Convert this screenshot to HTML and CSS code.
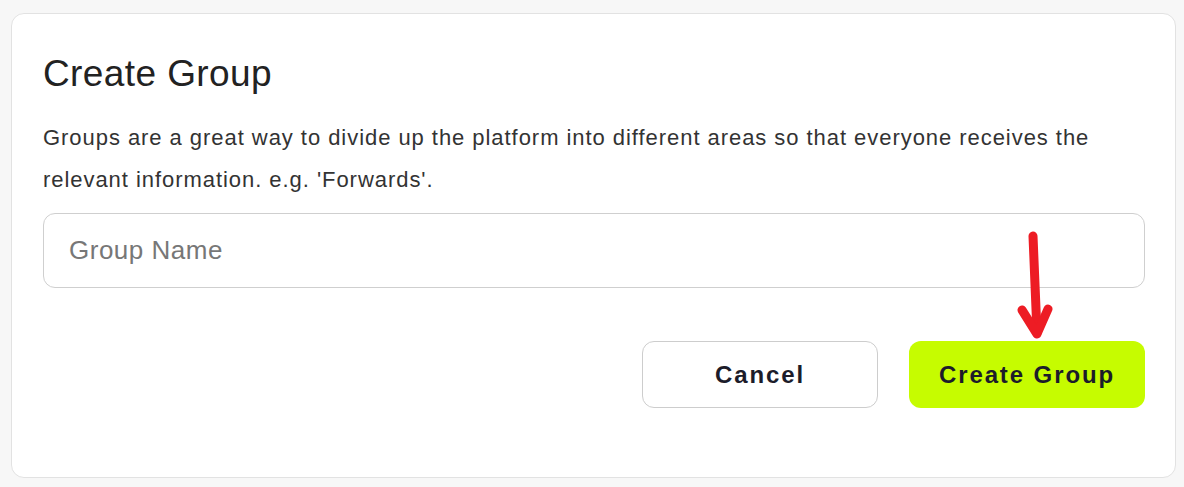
FILE: index.html
```html
<!doctype html>
<html lang="en">
  <head>
    <meta charset="utf-8">
    <title>Create Group</title>
    <link rel="stylesheet" href="styles.css">
  </head>
  <body>
    <div class="card">
      <h1 class="title">Create Group</h1>
      <p class="desc">Groups are a great way to divide up the platform into different areas so that everyone receives the relevant information. e.g. 'Forwards'.</p>
      <input class="name" type="text" placeholder="Group Name">
      <div class="actions">
        <button class="btn cancel">Cancel</button>
        <button class="btn create">Create Group</button>
        <svg class="arrow" width="50" height="120" viewBox="0 0 50 120">
          <path d="M24 10 L28 107" stroke="#ed1c24" stroke-width="9" stroke-linecap="round" fill="none"/>
          <path d="M13 84 L28 108 L39 83" stroke="#ed1c24" stroke-width="9" stroke-linecap="round" stroke-linejoin="round" fill="none"/>
        </svg>
      </div>
    </div>
  </body>
</html>
```

FILE: styles.css
```css
html, body { margin: 0; padding: 0; }
body {
  background: #f7f7f7;
  padding: 13px 8px 9px 11px;
  font-family: "Liberation Sans", Arial, sans-serif;
  color: #222;
}
.card {
  background: #fff;
  border: 1px solid #e2e2e2;
  border-radius: 13px;
  padding: 38px 30px 69px 31px;
}
.title {
  margin: 0;
  font-size: 37px;
  font-weight: 400;
  line-height: 44px;
  letter-spacing: 0.4px;
  color: #222;
}
.desc {
  margin: 21px 0 0;
  font-size: 22px;
  line-height: 42px;
  letter-spacing: 0.95px;
  color: #333;
}
.name {
  display: block;
  box-sizing: border-box;
  width: 100%;
  height: 75px;
  margin-top: 12px;
  padding: 0 25px;
  border: 1px solid #cfcfcf;
  border-radius: 12px;
  font-family: inherit;
  font-size: 26px;
  letter-spacing: 0.5px;
  outline: none;
}
.name::placeholder { color: #777; }
.actions {
  position: relative;
  display: flex;
  justify-content: flex-end;
  gap: 31px;
  margin-top: 53px;
}
.btn {
  box-sizing: border-box;
  width: 236px;
  height: 67px;
  border-radius: 12px;
  font-family: inherit;
  font-size: 24px;
  font-weight: 700;
  letter-spacing: 1.9px;
  color: #1c1c2a;
  cursor: pointer;
}
.cancel {
  background: #fff;
  border: 1px solid #cdcdcd;
}
.create {
  background: #c6fc00;
  border: none;
}
.arrow {
  position: absolute;
  right: 86px;
  top: -115px;
}
```
